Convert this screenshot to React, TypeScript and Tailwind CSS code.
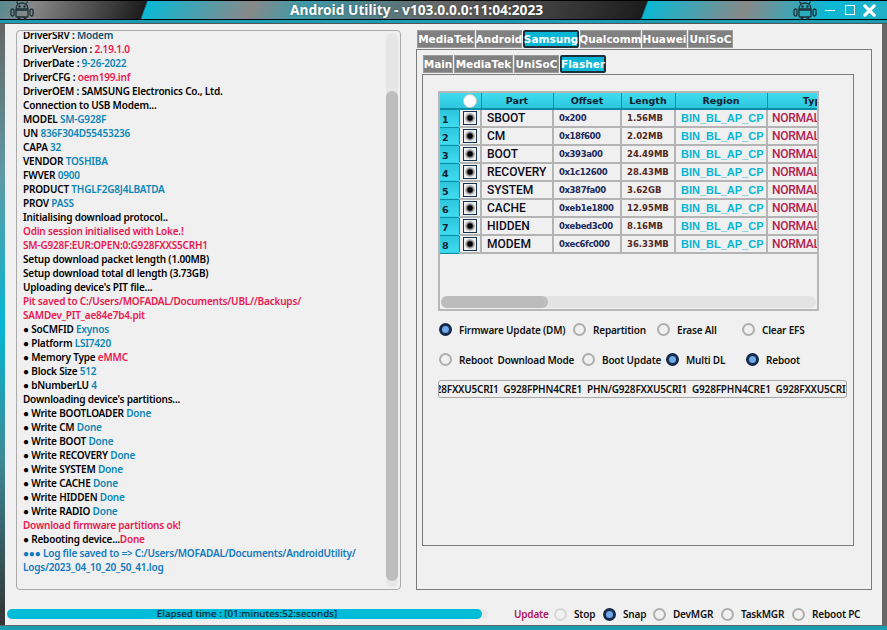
const LOG_FONT = "font-['Noto_Sans',sans-serif] text-[10px] font-semibold leading-[14px] tracking-[-0.2px]";

const R = "text-[#e8174e]";
const B = "text-[#0b86b5]";

// [text, color] pairs per line
const logLines: [string, string?][][] = [
  [["DriverSRV : "], ["Modem", "text-[#0a4f6e]"]],
  [["DriverVersion : "], ["2.19.1.0", R]],
  [["DriverDate : "], ["9-26-2022", B]],
  [["DriverCFG : "], ["oem199.inf", R]],
  [["DriverOEM : SAMSUNG Electronics Co., Ltd."]],
  [["Connection to USB Modem..."]],
  [["MODEL "], ["SM-G928F", B]],
  [["UN "], ["836F304D55453236", B]],
  [["CAPA "], ["32", B]],
  [["VENDOR "], ["TOSHIBA", B]],
  [["FWVER "], ["0900", B]],
  [["PRODUCT "], ["THGLF2G8J4LBATDA", B]],
  [["PROV "], ["PASS", B]],
  [["Initialising download protocol.."]],
  [["Odin session initialised with Loke.!", R]],
  [["SM-G928F:EUR:OPEN:0:G928FXXS5CRH1", R]],
  [["Setup download packet length (1.00MB)"]],
  [["Setup download total dl length (3.73GB)"]],
  [["Uploading device's PIT file..."]],
  [["Pit saved to C:/Users/MOFADAL/Documents/UBL//Backups/", R]],
  [["SAMDev_PIT_ae84e7b4.pit", R]],
  [["● SoCMFID "], ["Exynos", B]],
  [["● Platform "], ["LSI7420", B]],
  [["● Memory Type "], ["eMMC", R]],
  [["● Block Size "], ["512", B]],
  [["● bNumberLU "], ["4", B]],
  [["Downloading device's partitions..."]],
  [["● Write BOOTLOADER "], ["Done", B]],
  [["● Write CM "], ["Done", B]],
  [["● Write BOOT "], ["Done", B]],
  [["● Write RECOVERY "], ["Done", B]],
  [["● Write SYSTEM "], ["Done", B]],
  [["● Write CACHE "], ["Done", B]],
  [["● Write HIDDEN "], ["Done", B]],
  [["● Write RADIO "], ["Done", B]],
  [["Download firmware partitions ok!", R]],
  [["● Rebooting device..."], ["Done", R]],
  [["●●● Log file saved to => C:/Users/MOFADAL/Documents/AndroidUtility/", "text-[#1279bd]"]],
  [["Logs/2023_04_10_20_50_41.log", "text-[#1279bd]"]],
];

const rows = [
  ["SBOOT", "0x200", "1.56MB"],
  ["CM", "0x18f600", "2.02MB"],
  ["BOOT", "0x393a00", "24.49MB"],
  ["RECOVERY", "0x1c12600", "28.43MB"],
  ["SYSTEM", "0x387fa00", "3.62GB"],
  ["CACHE", "0xeb1e1800", "12.95MB"],
  ["HIDDEN", "0xebed3c00", "8.16MB"],
  ["MODEM", "0xec6fc000", "36.33MB"],
];

function AndroidIcon({ className }: { className: string }) {
  return (
    <svg viewBox="0 0 26 19" className={className} fill="none" stroke="#1c3036" strokeWidth="1.3">
      <path d="M7 8c0-4 3-6 6-6s6 2 6 6z" />
      <path d="M9 3 7.5 .5M17 3l1.5-2.5" />
      <path d="M7 9h12v6a1 1 0 0 1-1 1H8a1 1 0 0 1-1-1z" />
      <rect x="2" y="8" width="3" height="7" rx="1.5" />
      <rect x="21" y="8" width="3" height="7" rx="1.5" />
      <path d="M10 16v2.5M16 16v2.5" strokeWidth="2.5" />
      <circle cx="10.5" cy="5.5" r=".6" fill="#1c3036" />
      <circle cx="15.5" cy="5.5" r=".6" fill="#1c3036" />
    </svg>
  );
}

function Tab({ label, active, width }: { label: string; active?: boolean; width: string }) {
  return (
    <div
      className={`${width} h-[18px] flex items-center justify-center shrink-0 font-['DejaVu_Sans',sans-serif] font-bold text-[10.5px] text-white leading-none ${
        active ? "bg-[#06b6d4] border-2 border-[#1f2f3a] rounded-[2px]" : "bg-[#808080] border border-[#9a9a9a]"
      }`}
    >
      {label}
    </div>
  );
}

function Radio({ checked, faint }: { checked?: boolean; faint?: boolean }) {
  if (checked) {
    return (
      <span className="w-[13px] h-[13px] rounded-full bg-[#16294a] flex items-center justify-center shrink-0">
        <span className="w-[7px] h-[7px] rounded-full bg-[#6fa9e6]" />
      </span>
    );
  }
  return (
    <span className={`w-[13px] h-[13px] rounded-full border-2 shrink-0 ${faint ? "border-[#d8d8d8]" : "border-[#aeaeae]"}`} />
  );
}

function Option({ label, checked, width, faint }: { label: string; checked?: boolean; width: string; faint?: boolean }) {
  return (
    <div className={`${width} flex items-center gap-[7px] shrink-0`}>
      <Radio checked={checked} faint={faint} />
      <span className="font-['Noto_Sans',sans-serif] text-[10px] font-semibold tracking-[-0.2px] text-[#111] whitespace-pre leading-none">{label}</span>
    </div>
  );
}

const hcell = "border-r border-b-2 border-[#0a8ea3] font-['DejaVu_Sans',sans-serif] text-[9.5px] leading-none font-bold text-[#0c2030] text-center p-0";
const cell = "border-r-2 border-b-2 border-[#b4b4b4] p-0 pl-[5px] whitespace-nowrap overflow-hidden leading-none";

export default function App() {
  return (
    <div className="w-[887px] h-[630px] flex flex-col overflow-hidden bg-[#f0f0f0]">
      {/* Title bar */}
      <div className="h-[20px] shrink-0 border-t border-b border-black flex items-center pl-[9px] pr-[11px] bg-[linear-gradient(110deg,#5a8a90_0.4%,#888888_3.8%,#1c1c1c_16.4%,#0bb8d4_16.6%,#888888_28.4%,#3f9aa8_34%,#666666_49.6%,#1c1c1c_72.4%,#0bb8d4_72.6%,#888888_83.7%,#0bb8d4_93%,#22afc6_100%)]">
        <AndroidIcon className="w-[26px] h-[19px]" />
        <span className="font-['Noto_Sans',sans-serif] font-bold text-[13.75px] leading-none text-white [text-shadow:0_0_2px_rgba(0,0,0,0.4)] ml-[255px]">
          Android Utility - v103.0.0.0:11:04:2023
        </span>
        <div className="flex items-center ml-auto">
          <AndroidIcon className="w-[26px] h-[19px] mr-[7px]" />
          <div className="w-[10px] h-[1px] bg-white mr-[10px]" />
          <div className="w-[10px] h-[10px] border border-white mr-[8px]" />
          <svg viewBox="0 0 14 14" className="w-[13px] h-[13px]" stroke="#fff" strokeWidth="3.4" strokeLinecap="round">
            <path d="M2 2l10 10M12 2 2 12" />
          </svg>
        </div>
      </div>
      <div className="h-[3px] shrink-0 bg-[#1b9cb0]" />
      <div className="h-px shrink-0 bg-[#555]" />

      <div className="flex-1 flex min-h-0">
        <div className="w-[5px] shrink-0 bg-[linear-gradient(180deg,#666_0%,#5f9aa3_25%,#06b6d4_50%,#3d8a96_72%,#333_100%)]" />

        <div className="flex-1 flex flex-col min-w-0">
          <div className="flex pt-[6px] pl-[11px]">
            {/* Log panel */}
            <div className="w-[385px] h-[560px] border border-[#ababab] rounded-[4px] flex overflow-hidden shrink-0">
              <div className="flex-1 min-w-0 mt-[1px] overflow-hidden">
                <div className={`pl-[6px] -mt-[4px] text-black ${LOG_FONT}`}>
                  {logLines.map((line, i) => (
                    <div key={i} className="h-[14px] whitespace-nowrap">
                      {line.map(([text, color], j) => (
                        <span key={j} className={color}>
                          {text}
                        </span>
                      ))}
                    </div>
                  ))}
                </div>
              </div>
              <div className="w-[12px] shrink-0 mr-[2px] my-[2px] bg-[#e6e6e6] rounded-full flex flex-col pt-[58px] pb-[6px]">
                <div className="flex-1 bg-[#bdbdbd] rounded-full" />
              </div>
            </div>

            {/* Tabs */}
            <div className="w-[456px] ml-[15px] flex flex-col shrink-0">
              <div className="flex h-[18px] gap-px pl-[1px]">
                <Tab label="MediaTek" width="w-[58px]" />
                <Tab label="Android" width="w-[46px]" />
                <Tab label="Samsung" active width="w-[56px]" />
                <Tab label="Qualcomm" width="w-[61px]" />
                <Tab label="Huawei" width="w-[45px]" />
                <Tab label="UniSoC" width="w-[45px]" />
              </div>
              <div className="mt-px h-[541px] border border-[#7c7c7c] pl-[5px] pt-[5px]">
                <div className="flex h-[18px] gap-px pl-[1px]">
                  <Tab label="Main" width="w-[30px]" />
                  <Tab label="MediaTek" width="w-[59px]" />
                  <Tab label="UniSoC" width="w-[45px]" />
                  <Tab label="Flasher" active width="w-[46px]" />
                </div>
                <div className="mt-px w-[432px] h-[472px] border border-[#7c7c7c] pt-[16px] pl-[15px]">
                  {/* Partition grid */}
                  <div className="w-[381px] h-[220px] border-2 border-[#b8b8b8] flex flex-col">
                    <div className="h-[203px] overflow-hidden">
                      <table className="table-fixed border-collapse w-[423px]">
                        <colgroup>
                          <col className="w-[19px]" />
                          <col className="w-[22px]" />
                          <col className="w-[72px]" />
                          <col className="w-[68px]" />
                          <col className="w-[54px]" />
                          <col className="w-[92px]" />
                          <col className="w-[96px]" />
                        </colgroup>
                        <thead>
                          <tr className="h-[16px] bg-[linear-gradient(180deg,#3fdcf0,#2cc5dc)]">
                            <th className="border-b-2 border-[#0a8ea3] p-0" />
                            <th className={hcell}>
                              <span className="block w-[14px] h-[14px] rounded-full bg-white border border-[#c8c8c8] mx-auto" />
                            </th>
                            <th className={hcell}>Part</th>
                            <th className={hcell}>Offset</th>
                            <th className={hcell}>Length</th>
                            <th className={hcell}>Region</th>
                            <th className="border-b-2 border-[#0a8ea3] font-['DejaVu_Sans',sans-serif] text-[9.5px] leading-none font-bold text-[#0c2030] text-center p-0 whitespace-nowrap">
                              Type
                            </th>
                          </tr>
                        </thead>
                        <tbody>
                          {rows.map(([part, offset, length], i) => (
                            <tr key={part} className="h-[18px]">
                              <td className="bg-[linear-gradient(180deg,#2cc5dc,#3fdcf0)] border-r border-b border-[#0a8ea3] p-0 pl-[2px] pt-[3px] font-['DejaVu_Sans',sans-serif] text-[9.5px] font-bold text-[#0c2030] leading-none">
                                {i + 1}
                              </td>
                              <td className="border-r-2 border-b-2 border-[#b4b4b4] p-0 leading-none">
                                <span className="mx-auto w-[14px] h-[14px] border border-[#16344f] flex items-center justify-center">
                                  <span className="w-[10px] h-[10px] rounded-full bg-[radial-gradient(circle,#000_0%,#000_30%,#aaa_55%,#e8e8e8_100%)]" />
                                </span>
                              </td>
                              <td className={`${cell} font-['Roboto',sans-serif] text-[12px] font-medium text-[#0a0a1a]`}>{part}</td>
                              <td className={`${cell} font-['DejaVu_Sans',sans-serif] text-[8.5px] font-bold tracking-[-0.4px] text-[#1b2a5c]`}>{offset}</td>
                              <td className={`${cell} font-['DejaVu_Sans',sans-serif] text-[8.5px] font-bold text-[#53281f]`}>{length}</td>
                              <td className={`${cell} font-['Liberation_Sans',sans-serif] text-[11px] font-semibold text-[#06b6d4]`}>BIN_BL_AP_CP</td>
                              <td className="border-b-2 border-[#b4b4b4] p-0 pl-[4px] whitespace-nowrap leading-none font-['Roboto',sans-serif] text-[12px] font-medium tracking-[-0.3px] text-[#b3224f]">
                                NORMAL
                              </td>
                            </tr>
                          ))}
                        </tbody>
                      </table>
                    </div>
                    <div className="h-[12px] mx-[1px] bg-[#e3e3e3] rounded-full">
                      <div className="w-[107px] h-full bg-[#bcbcbc] rounded-full" />
                    </div>
                  </div>

                  {/* Options */}
                  <div className="flex mt-[12px] h-[13px] ml-[1px]">
                    <Option label="Firmware Update (DM)" checked width="w-[134px]" />
                    <Option label="Repartition" width="w-[84px]" />
                    <Option label="Erase All" width="w-[85px]" />
                    <Option label="Clear EFS" width="w-[90px]" />
                  </div>
                  <div className="flex mt-[17px] h-[13px] ml-[1px]">
                    <Option label="Reboot  Download Mode" width="w-[143px]" />
                    <Option label="Boot Update" width="w-[84px]" />
                    <Option label="Multi DL" checked width="w-[80px]" />
                    <Option label="Reboot" checked width="w-[80px]" />
                  </div>
                  <div className="mt-[14px] w-[409px] h-[18px] border border-[#a8a8a8] rounded-[3px] overflow-hidden flex items-center justify-end">
                    <span className="font-['Noto_Sans',sans-serif] text-[10px] font-semibold tracking-[-0.2px] [word-spacing:2.5px] text-[#111] whitespace-nowrap -mr-[5px]">
                      G928FXXU5CRI1 G928FPHN4CRE1 PHN/G928FXXU5CRI1 G928FPHN4CRE1 G928FXXU5CRI1
                    </span>
                  </div>
                </div>
              </div>
            </div>
          </div>

          {/* Status row */}
          <div className="flex items-center mt-[19px] pl-[2px] h-[10px]">
            <div className="w-[481px] h-[10px] bg-[#e8e8e8] rounded-full shrink-0">
              <div className="w-[475px] h-full rounded-full bg-[#00bcd8] flex items-center justify-center pl-[5px]">
                <span className="font-['Noto_Sans',sans-serif] text-[9.75px] font-medium text-[#06222e] whitespace-nowrap leading-none">
                  Elapsed time : [01:minutes:52:seconds]
                </span>
              </div>
            </div>
            <span className="ml-[26px] w-[40px] shrink-0 font-['Noto_Sans',sans-serif] text-[10px] font-semibold tracking-[-0.2px] text-[#b0135e] leading-none">Update</span>
            <Option label="Stop" faint width="w-[49px]" />
            <Option label="Snap" checked width="w-[50px]" />
            <Option label="DevMGR" width="w-[68px]" />
            <Option label="TaskMGR" width="w-[71px]" />
            <Option label="Reboot PC" width="w-[85px]" />
          </div>
        </div>

        <div className="w-[5px] shrink-0 bg-[#666]" />
      </div>

      <div className="h-px shrink-0 bg-[#666]" />
      <div className="h-[4px] shrink-0 bg-[#1b9cb0]" />
    </div>
  );
}
